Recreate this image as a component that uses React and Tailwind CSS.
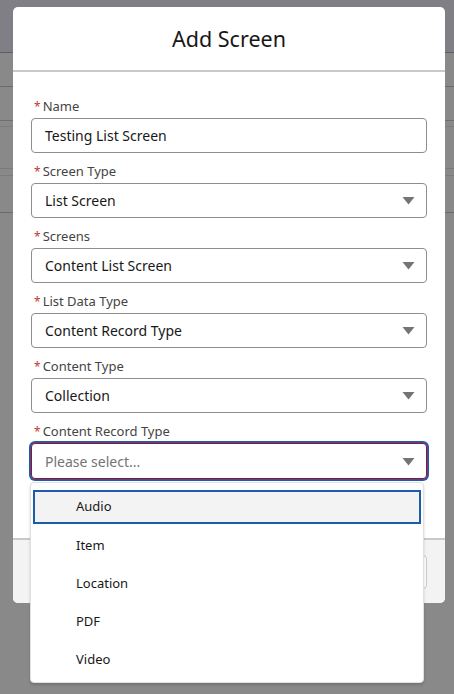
import { useState } from 'react'

const fields = [
  { label: 'Name', value: 'Testing List Screen', input: true },
  { label: 'Screen Type', value: 'List Screen' },
  { label: 'Screens', value: 'Content List Screen' },
  { label: 'List Data Type', value: 'Content Record Type' },
  { label: 'Content Type', value: 'Collection' },
]

const options = ['Audio', 'Item', 'Location', 'PDF', 'Video']

function Caret() {
  return (
    <svg width="13" height="9" viewBox="0 0 13 9" className="shrink-0">
      <path d="M0.5 1 L12.5 1 L6.5 8.5 Z" fill="#747474" />
    </svg>
  )
}

function Label({ children }) {
  return (
    <div className="flex items-center h-[19px] pl-[3px] text-[13px] text-[#444444]">
      <span className="text-[#c23934] text-[12px] mr-[2px] leading-none">*</span>
      {children}
    </div>
  )
}

function Field({ label, value, input }) {
  return (
    <div className="flex flex-col gap-[2px]">
      <Label>{label}</Label>
      <div className="h-[35px] border border-[#8e8e8e] rounded-[4px] bg-white flex items-center pl-[13px] pr-[11px] text-[14px] text-[#181818]">
        <span className="flex-1">{value}</span>
        {!input && <Caret />}
      </div>
    </div>
  )
}

export default function App() {
  const [active] = useState(0)

  return (
    <div className="relative w-full h-[694px] overflow-hidden bg-[#898989]" style={{ fontFamily: '"Noto Sans", "Open Sans", sans-serif' }}>
      {/* page behind the backdrop */}
      <div className="flex flex-col">
        <div className="h-[53px] bg-[#7f7f85] border-b border-[#5e5e5e]" />
        <div className="h-[34px] border-b border-[#6a6a6a]" />
        <div className="h-[34px] border-b border-[#6f6f6f]" />
        <div className="h-[6px] border-b border-[#7c7c7c]" />
        <div className="h-[42px] border-b border-[#7a7a7a]" />
        <div className="h-[7px] border-b border-[#7c7c7c]" />
        <div className="h-[37px] border-b border-[#6a6a6a]" />
      </div>

      {/* modal */}
      <div className="absolute left-[13px] top-[7px] w-[432px] h-[596px] bg-white rounded-[5px] flex flex-col overflow-hidden">
        <div className="h-[65px] shrink-0 border-b-2 border-[#c9c9c9] flex items-center justify-center pt-[2px] text-[21.5px] text-[#181818]">
          Add Screen
        </div>
        <div className="flex-1 flex flex-col gap-[9px] px-[18px] pt-[25px]">
          {fields.map((f) => (
            <Field key={f.label} {...f} />
          ))}
          <div className="flex flex-col gap-[2px]">
            <Label>Content Record Type</Label>
            <div className="h-[36px] border border-[#ba0517] rounded-[4px] shadow-[0_0_0_2px_#1b5dab] bg-white flex items-center pl-[13px] pr-[11px] text-[14px] text-[#747474]">
              <span className="flex-1">Please select...</span>
              <Caret />
            </div>
          </div>
        </div>
        <div className="h-[65px] shrink-0 border-t-2 border-[#c9c9c9] bg-[#f3f3f3] flex items-center justify-end pr-[18px]">
          <div className="w-[70px] h-[34px] rounded-[4px] border border-[#c9c9c9] bg-white" />
        </div>
      </div>

      {/* open listbox */}
      <div className="absolute left-[30px] top-[482px] w-[394px] h-[201px] bg-white rounded-[4px] border border-[#e0e0e0] shadow-[0_2px_3px_rgba(0,0,0,0.16)] pt-[6px] px-[2px]">
        {options.map((o, i) =>
          i === active ? (
            <div key={o} className="h-[38px] py-[1px]">
              <div className="h-[34px] border-2 border-[#1b5dab] bg-[#f3f3f3] flex items-center pl-[41px] text-[13px] text-[#181818]">
                {o}
              </div>
            </div>
          ) : (
            <div key={o} className="h-[38px] flex items-center pl-[43px] text-[13px] text-[#181818]">
              {o}
            </div>
          )
        )}
      </div>
    </div>
  )
}
